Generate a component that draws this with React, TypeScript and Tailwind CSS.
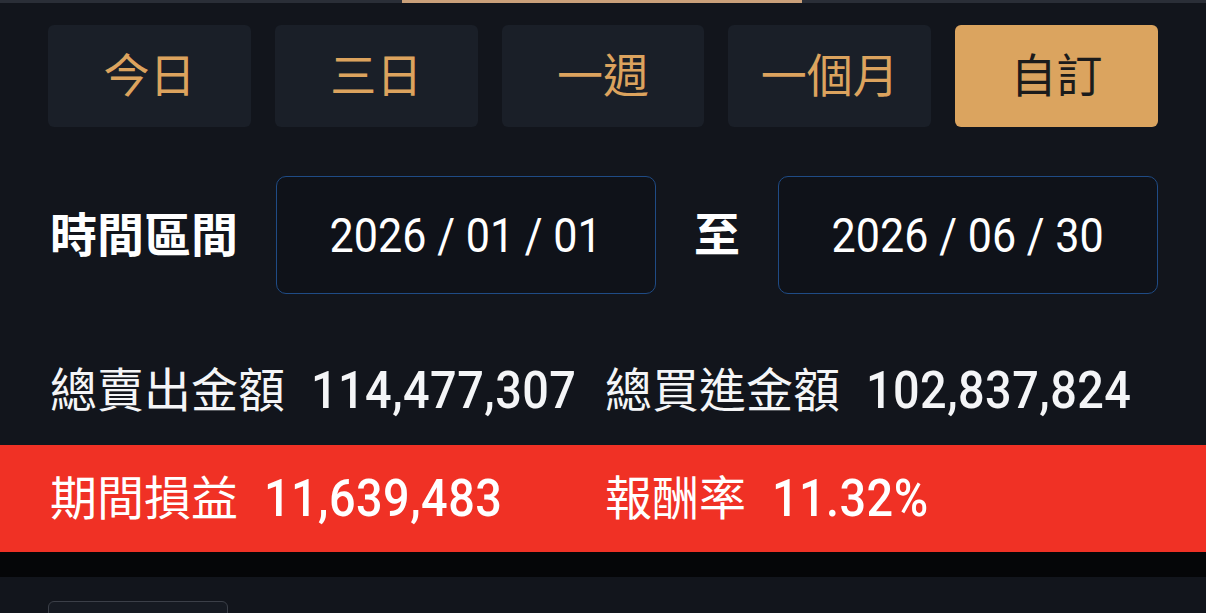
import React from 'react';

const RANGES = ['今日', '三日', '一週', '一個月', '自訂'];

const Num: React.FC<{ children: React.ReactNode }> = ({ children }) => (
  <span className="inline-block origin-left scale-x-[0.9] whitespace-nowrap text-[52px] font-medium leading-none tracking-[0.5px]">
    {children}
  </span>
);

const Stat: React.FC<{ label: string; value: string }> = ({ label, value }) => (
  <div className="flex items-center gap-[26px] whitespace-nowrap">
    <span className="text-[47px] leading-none">{label}</span>
    <Num>{value}</Num>
  </div>
);

const DateBox: React.FC<{ value: string }> = ({ value }) => (
  <div className="h-[118px] rounded-[10px] border border-[#1f4b85] bg-[#0f1219] flex items-center justify-center">
    <span className="inline-block scale-x-[0.88] whitespace-nowrap text-[49px] leading-none text-white">{value}</span>
  </div>
);

const App: React.FC = () => {
  const [active, setActive] = React.useState(4);

  return (
    <div
      className="w-full h-[613px] overflow-hidden bg-[#12151c] text-[#f4f5f7]"
      style={{ fontFamily: 'Roboto, "Noto Sans CJK TC", sans-serif' }}
    >
      {/* tab indicator */}
      <div className="flex h-[3px]">
        <div className="w-[402px] bg-[#2a2e37]" />
        <div className="w-[400px] bg-[#caa07a]" />
        <div className="flex-1 bg-[#2a2e37]" />
      </div>

      {/* quick ranges */}
      <div className="grid grid-cols-5 gap-[24px] px-[48px] mt-[22px]">
        {RANGES.map((r, i) => (
          <button
            key={r}
            type="button"
            onClick={() => setActive(i)}
            className={`h-[102px] rounded-md text-[46px] leading-none flex items-center justify-center ${
              i === active ? 'bg-[#dba45f] text-[#1b1b1b]' : 'bg-[#1a1f28] text-[#dca35e]'
            }`}
          >
            {r}
          </button>
        ))}
      </div>

      {/* date range */}
      <div className="grid grid-cols-[228px_380px_122px_380px] items-center px-[48px] mt-[49px]">
        <span className="pl-[2px] text-[47px] font-bold leading-none text-white">時間區間</span>
        <DateBox value="2026 / 01 / 01" />
        <span className="text-center text-[46px] font-bold leading-none text-white">至</span>
        <DateBox value="2026 / 06 / 30" />
      </div>

      {/* totals */}
      <div className="h-[151px] pt-[42px] grid grid-cols-[555px_1fr] items-center px-[50px]">
        <Stat label="總賣出金額" value="114,477,307" />
        <Stat label="總買進金額" value="102,837,824" />
      </div>

      {/* profit */}
      <div className="h-[107px] bg-[#f03125] grid grid-cols-[555px_1fr] items-center px-[50px] text-white">
        <Stat label="期間損益" value="11,639,483" />
        <Stat label="報酬率" value="11.32%" />
      </div>

      <div className="h-[25px] bg-[#050608]" />

      <div className="px-[48px] pt-[24px]">
        <div className="w-[180px] h-[60px] rounded-md border border-[#3b3f48] bg-[#161a22]" />
      </div>
    </div>
  );
};

export default App;
